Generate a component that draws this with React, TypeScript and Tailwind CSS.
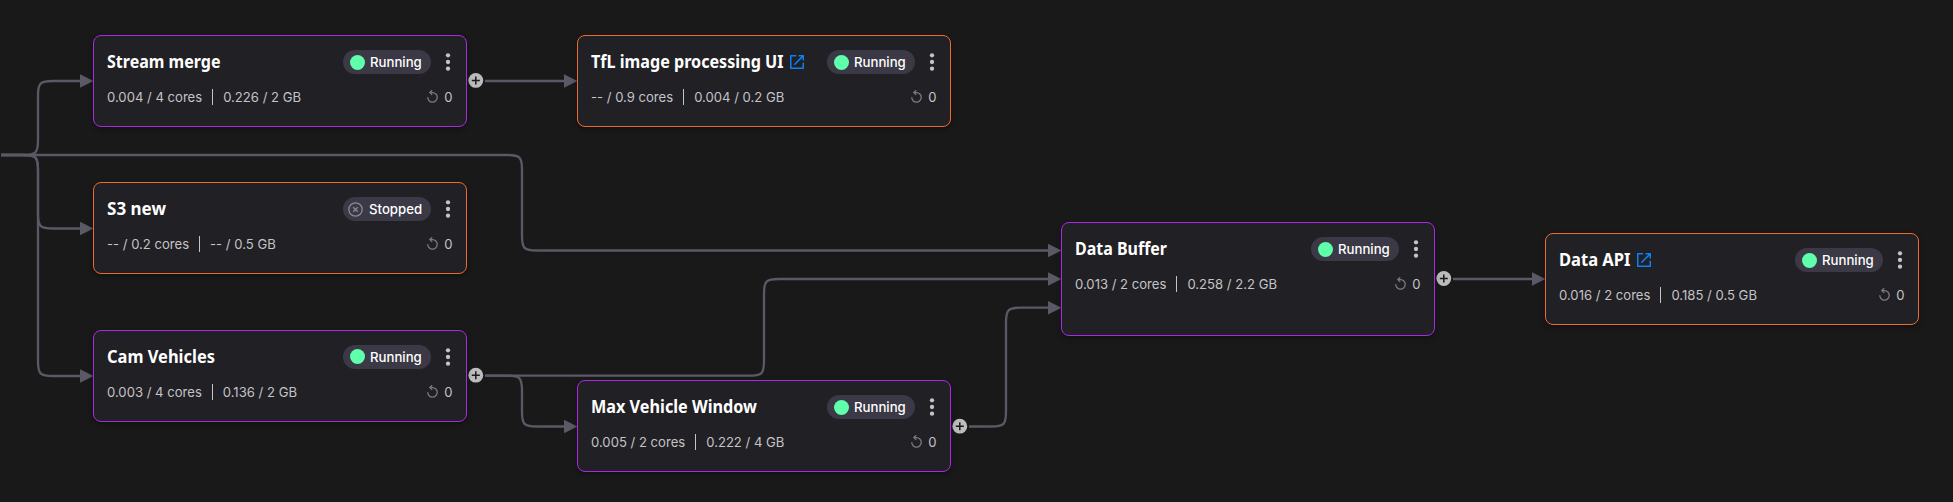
import React from "react";

type Status = "Running" | "Stopped";

interface NodeData {
  name: string;
  x: number;
  y: number;
  h: number;
  kind: "transform" | "sink";
  cores: string;
  memory: string;
  status: Status;
  titleWidth: number;
  link?: boolean;
}

const nodes: NodeData[] = [
  { name: "Stream merge", x: 93, y: 35, h: 92, kind: "transform", cores: "0.004 / 4 cores", memory: "0.226 / 2 GB", status: "Running", titleWidth: 113.5 },
  { name: "TfL image processing UI", x: 577, y: 35, h: 92, kind: "sink", cores: "-- / 0.9 cores", memory: "0.004 / 0.2 GB", status: "Running", titleWidth: 192.5, link: true },
  { name: "S3 new", x: 93, y: 182, h: 92, kind: "sink", cores: "-- / 0.2 cores", memory: "-- / 0.5 GB", status: "Stopped", titleWidth: 59 },
  { name: "Cam Vehicles", x: 93, y: 329.6, h: 92, kind: "transform", cores: "0.003 / 4 cores", memory: "0.136 / 2 GB", status: "Running", titleWidth: 108 },
  { name: "Max Vehicle Window", x: 577, y: 380, h: 92, kind: "transform", cores: "0.005 / 2 cores", memory: "0.222 / 4 GB", status: "Running", titleWidth: 166 },
  { name: "Data Buffer", x: 1061, y: 222, h: 114, kind: "transform", cores: "0.013 / 2 cores", memory: "0.258 / 2.2 GB", status: "Running", titleWidth: 92 },
  { name: "Data API", x: 1545, y: 233, h: 92, kind: "sink", cores: "0.016 / 2 cores", memory: "0.185 / 0.5 GB", status: "Running", titleWidth: 71.5, link: true },
];

interface Edge {
  from: [number, number];
  bend?: number;
  to: [number, number];
}

const edges: Edge[] = [
  { from: [1, 155], bend: 38, to: [93, 81] },
  { from: [1, 155], bend: 38, to: [93, 228.5] },
  { from: [1, 155], bend: 38, to: [93, 376] },
  { from: [1, 155], bend: 522, to: [1061, 250.5] },
  { from: [485, 81], to: [577, 81] },
  { from: [485, 375.7], bend: 764, to: [1061, 279] },
  { from: [485, 375.7], bend: 522, to: [577, 426.5] },
  { from: [969, 426.5], bend: 1006, to: [1061, 307.7] },
  { from: [1453, 279], to: [1545, 279] },
];

const ports: [number, number][] = [[475.8, 80.4], [475.8, 375.2], [959.8, 426.2], [1443.8, 278.5]];

// Orthogonal route with tight, tapered corners; it ends at the arrow's base.
function edgePath({ from: [x1, y1], bend, to: [x2, y2] }: Edge) {
  const end = x2 - 12;
  if (bend === undefined) return `M${x1} ${y1}H${end}`;
  const r = 15;
  const c = 2;
  const s = y2 > y1 ? 1 : -1;
  return [
    `M${x1} ${y1}H${bend - r}`,
    `C${bend - c} ${y1} ${bend} ${y1 + s * c} ${bend} ${y1 + s * r}`,
    `V${y2 - s * r}`,
    `C${bend} ${y2 - s * c} ${bend + c} ${y2} ${bend + r} ${y2}`,
    `H${end}`,
  ].join("");
}

function StatusPill({ status }: { status: Status }) {
  return (
    <div className="flex h-6 w-22 shrink-0 items-center rounded-full bg-[#3a3945] text-[13.2px] leading-5 font-medium text-white">
      {status === "Running" ? (
        <span className="mr-[5.5px] ml-[6.5px] size-[15px] shrink-0 rounded-full bg-[#5fffab]" />
      ) : (
        <svg className="mr-[6px] ml-[5px] size-[15px] shrink-0" viewBox="0 0 15 15" fill="none" stroke="#8b8a95" strokeWidth="1.3">
          <circle cx="7.5" cy="7.5" r="6.7" />
          <path d="M5.2 5.2l4.6 4.6M9.8 5.2l-4.6 4.6" />
        </svg>
      )}
      <span>{status}</span>
    </div>
  );
}

function NodeCard({ node }: { node: NodeData }) {
  return (
    <article
      className={`absolute w-[374px] rounded-lg border bg-[#212025] px-[13px] pt-[14px] shadow-[0_2px_5px_rgba(0,0,0,0.35)] ${
        node.kind === "transform" ? "border-[#ac28e8]" : "border-[#ee6a2e]"
      }`}
      style={{ left: node.x, top: node.y, height: node.h }}
    >
      <header className="flex h-6 items-center">
        <svg className="h-6 overflow-visible" width={node.titleWidth} height="24">
          <text
            x="0"
            y="18"
            textLength={node.titleWidth}
            lengthAdjust="spacingAndGlyphs"
            className="fill-white font-['Noto_Sans',sans-serif] text-[17.6px] font-bold"
          >
            {node.name}
          </text>
        </svg>
        {node.link && (
          <svg className="ml-[6.5px] size-[14px]" viewBox="0 0 14 14" fill="none" stroke="#0d80f2" strokeWidth="1.5" strokeLinejoin="round">
            <path d="M6.2 .75H.75v12.5h12.5V7.8M8.6 .75h4.65V5.4M13.1 .9L4.3 9.7" />
          </svg>
        )}
        <div className="ml-auto flex items-center">
          <StatusPill status={node.status} />
          <svg className="mr-[3px] ml-[15px] h-[18px] w-1 overflow-visible" viewBox="0 0 4 18" fill="#c4c3c8">
            <circle cx="2" cy="2.3" r="2.15" />
            <circle cx="2" cy="9" r="2.15" />
            <circle cx="2" cy="15.7" r="2.15" />
          </svg>
        </div>
      </header>
      <div className="mt-[11px] flex h-6 items-center text-[13.1px] leading-5 text-[#c4c3c7]">
        <span>{node.cores}</span>
        <span className="mx-[10px] h-4 w-px bg-[#c4c3c7]" />
        <span>{node.memory}</span>
        <svg className="mr-[6.5px] mb-px ml-auto h-[13px] w-[11px]" viewBox="0 0 11 13" fill="none" stroke="#7c7b81" strokeWidth="1.3">
          <path d="M.75 7.3A4.75 4.75 0 1 0 5.5 2.6H3" />
          <path d="M5.2.3L2.8 2.6L5.2 4.9" />
        </svg>
        <span className="mr-[0.5px]">0</span>
      </div>
    </article>
  );
}

export default function App() {
  return (
    <main className="relative h-[502px] w-[1953px] overflow-hidden bg-[#191919] font-[Inter,sans-serif]">
      <svg className="absolute inset-0" width="1953" height="502" fill="none">
        {edges.map((edge) => {
          const d = edgePath(edge);
          const [x, y] = edge.to;
          return (
            <g key={d}>
              <path d={d} stroke="#5b5965" strokeWidth="2.3" />
              <path d={`M${x + 0.5} ${y}l-13.5 -6.8v13.6z`} fill="#5b5965" />
            </g>
          );
        })}
        {ports.map(([x, y]) => (
          <g key={`${x}-${y}`}>
            <circle cx={x} cy={y} r="7.4" fill="#bdbcbd" />
            <path d={`M${x - 4} ${y}h8M${x} ${y - 4}v8`} stroke="#191919" strokeWidth="1.5" />
          </g>
        ))}
      </svg>
      {nodes.map((node) => (
        <NodeCard key={node.name} node={node} />
      ))}
    </main>
  );
}
